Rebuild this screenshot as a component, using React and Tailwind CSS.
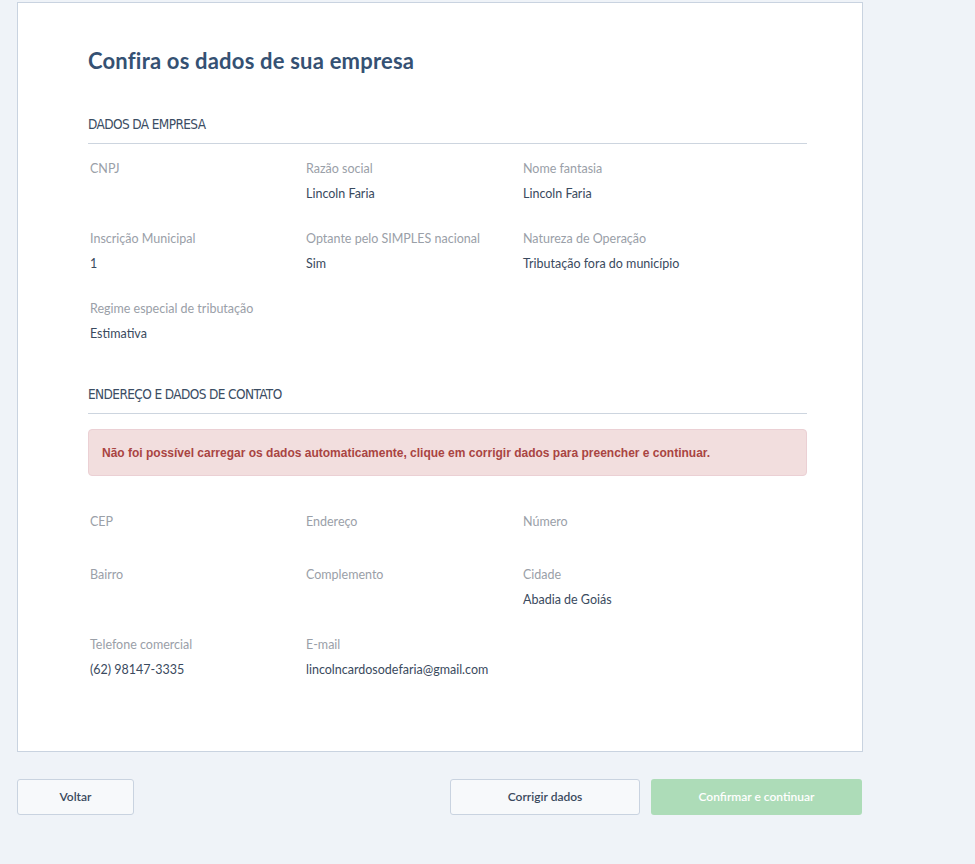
import React from "react";

const Field = ({ label, value, className = "" }) => (
  <div className={className}>
    <div className="text-[12.5px] leading-[16px] text-[#9aa0a8]">{label}</div>
    {value && (
      <div className="mt-[9px] text-[12.5px] leading-[16px] text-[#3a4a5e]">
        {value}
      </div>
    )}
  </div>
);

const SectionTitle = ({ children }) => (
  <div className="border-b border-[#cdd5df] pb-[11px]">
    <h2 className="text-[13.5px] leading-[16px] text-[#3b4d63] [font-family:'DejaVu_Sans_Condensed','DejaVu_Sans',sans-serif] font-stretch-condensed tracking-[-0.6px]">
      {children}
    </h2>
  </div>
);

export default function App() {
  return (
    <div className="min-h-[864px] bg-[#eff3f8] pt-[2px] pl-[17px] [font-family:Lato,'Liberation_Sans',sans-serif]">
      <div className="w-[846px] bg-white border border-[#c9d3e0] pl-[70px] pr-[55px] pt-[45px] pb-[73px]">
        <h1 className="text-[22px] leading-[26px] font-bold tracking-[0.2px] text-[#355173]">
          Confira os dados de sua empresa
        </h1>

        {/* Dados da empresa */}
        <div className="mt-[42px]">
          <SectionTitle>DADOS DA EMPRESA</SectionTitle>
          <div className="grid grid-cols-[216px_217px_1fr] gap-y-[29px] pl-[2px] pt-[17px]">
            <Field label="CNPJ" />
            <Field label="Razão social" value="Lincoln Faria" />
            <Field label="Nome fantasia" value="Lincoln Faria" />
            <Field label="Inscrição Municipal" value="1" />
            <Field label="Optante pelo SIMPLES nacional" value="Sim" />
            <Field label="Natureza de Operação" value="Tributação fora do município" />
            <Field label="Regime especial de tributação" value="Estimativa" />
          </div>
        </div>

        {/* Endereço */}
        <div className="mt-[44px]">
          <SectionTitle>ENDEREÇO E DADOS DE CONTATO</SectionTitle>
          <div className="mt-[15px] h-[47px] flex items-center rounded-[4px] border border-[#ebd0d4] bg-[#f2dede] pl-[13px]">
            <p className="text-[12px] font-bold text-[#a94442] [font-family:'Liberation_Sans',sans-serif]">
              Não foi possível carregar os dados automaticamente, clique em corrigir dados para preencher e continuar.
            </p>
          </div>
          <div className="grid grid-cols-[216px_217px_1fr] pl-[2px] pt-[38px]">
            <Field label="CEP" />
            <Field label="Endereço" />
            <Field label="Número" />
          </div>
          <div className="grid grid-cols-[216px_217px_1fr] gap-y-[29px] pl-[2px] pt-[37px]">
            <Field label="Bairro" />
            <Field label="Complemento" />
            <Field label="Cidade" value="Abadia de Goiás" />
            <Field label="Telefone comercial" value="(62) 98147-3335" />
            <Field label="E-mail" value="lincolncardosodefaria@gmail.com" />
          </div>
        </div>
      </div>

      {/* Buttons */}
      <div className="w-[845px] mt-[27px] flex items-center">
        <button className="h-[36px] w-[117px] rounded-[3px] border border-[#c9d3e0] bg-[#f7f9fb] text-[12px] font-semibold text-[#3a4a5e]">
          Voltar
        </button>
        <div className="ml-auto flex gap-[11px]">
          <button className="h-[36px] w-[190px] rounded-[3px] border border-[#c9d3e0] bg-[#f7f9fb] text-[12px] font-semibold text-[#3a4a5e]">
            Corrigir dados
          </button>
          <button className="h-[36px] w-[211px] rounded-[3px] bg-[#addcb8] text-[12px] font-semibold text-white">
            Confirmar e continuar
          </button>
        </div>
      </div>
    </div>
  );
}
